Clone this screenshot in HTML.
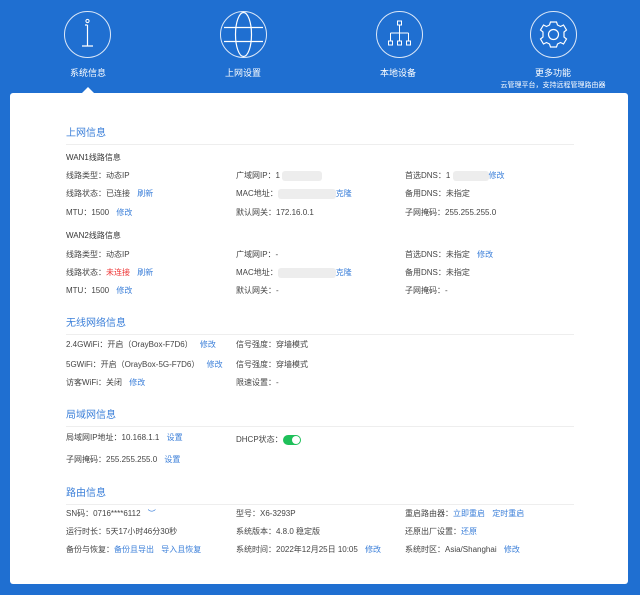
<!DOCTYPE html>
<html><head><meta charset="utf-8"><style>
*{margin:0;padding:0;box-sizing:border-box}
body{width:640px;height:595px;background:#1f6fd1;position:relative;overflow:hidden;font-family:"Liberation Sans","Noto Sans CJK SC",sans-serif;font-size:8px;color:#444}
.card{position:absolute;left:10px;top:93px;width:618px;height:491px;background:#fff;border-radius:3px}
.arrow{position:absolute;left:82px;top:87px;width:0;height:0;border-left:6px solid transparent;border-right:6px solid transparent;border-bottom:6px solid #fff}
.nav{position:absolute;color:#fff;text-align:center;font-size:9px}
.ic{position:absolute;width:47px;height:47px;border:1.3px solid #dce8f8;border-radius:50%}
.t{position:absolute;white-space:nowrap}
.h{position:absolute;left:66px;width:508px;color:#3b7fd9;font-size:10px;border-bottom:1.5px solid #eee;padding-bottom:5px}
.s{position:absolute;left:66px;color:#333;font-size:8px}
a{color:#3b7fd9;text-decoration:none;margin-left:5px}
.blur{display:inline-block;background:#ededed;height:10px;vertical-align:middle;border-radius:3px}
</style></head><body>
<div class="ic" style="left:64px;top:11px"><svg width="47" height="47" viewBox="0 0 47 47" style="position:absolute;left:-1px;top:-1px"><circle cx="23.5" cy="10" r="1.6" fill="none" stroke="#fff"/><path d="M23.5 14V35M18 35H29M21 14H23.5" stroke="#fff" stroke-width="1.2" fill="none"/></svg></div>
<div class="ic" style="left:220px;top:11px"><svg width="47" height="47" viewBox="0 0 47 47" style="position:absolute;left:-1px;top:-1px"><ellipse cx="23.5" cy="23.5" rx="8" ry="22" fill="none" stroke="#fff" stroke-width="1.2"/><path d="M4 16.5H43M4 30.5H43" stroke="#fff" stroke-width="1.2"/></svg></div>
<div class="ic" style="left:376px;top:11px"><svg width="47" height="47" viewBox="0 0 47 47" style="position:absolute;left:-1px;top:-1px"><rect x="21.5" y="10" width="4" height="4" fill="none" stroke="#fff"/><path d="M23.5 14V22M14.5 22H32.5M14.5 22V30M23.5 22V30M32.5 22V30" stroke="#fff" fill="none"/><rect x="12.5" y="30" width="4" height="4" fill="none" stroke="#fff"/><rect x="21.5" y="30" width="4" height="4" fill="none" stroke="#fff"/><rect x="30.5" y="30" width="4" height="4" fill="none" stroke="#fff"/></svg></div>
<div class="ic" style="left:530px;top:11px"><svg width="47" height="47" viewBox="0 0 47 47" style="position:absolute;left:-1px;top:-1px"><path d="M20.5 11H26.5L27.5 14L30.5 15.5L33.5 14L36.5 19L34 21V26L36.5 28L33.5 33L30.5 31.5L27.5 33L26.5 36H20.5L19.5 33L16.5 31.5L13.5 33L10.5 28L13 26V21L10.5 19L13.5 14L16.5 15.5L19.5 14Z" fill="none" stroke="#fff" stroke-width="1.2"/><circle cx="23.5" cy="23.5" r="5" fill="none" stroke="#fff" stroke-width="1.2"/></svg></div>
<div class="nav" style="left:48px;top:66px;width:80px">系统信息</div>
<div class="nav" style="left:203px;top:66px;width:80px">上网设置</div>
<div class="nav" style="left:358px;top:66px;width:80px">本地设备</div>
<div class="nav" style="left:513px;top:66px;width:80px">更多功能</div>
<div class="nav" style="left:488px;top:80px;width:130px;font-size:7px">云管理平台，支持远程管理路由器</div>
<div class="arrow"></div>
<div class="card"></div>

<div class="h" style="top:124px">上网信息</div>
<div class="s" style="top:152px">WAN1线路信息</div>
<div class="t" style="left:66px;top:170px">线路类型：动态IP</div>
<div class="t" style="left:236px;top:170px">广域网IP：1 <span class="blur" style="width:40px"></span></div>
<div class="t" style="left:405px;top:170px">首选DNS：1 <span class="blur" style="width:36px"></span><a style="margin-left:0">修改</a></div>
<div class="t" style="left:66px;top:188px">线路状态：已连接 <a>刷新</a></div>
<div class="t" style="left:236px;top:188px">MAC地址：<span class="blur" style="width:58px"></span><a style="margin-left:0">克隆</a></div>
<div class="t" style="left:405px;top:188px">备用DNS：未指定</div>
<div class="t" style="left:66px;top:207px">MTU：1500 <a>修改</a></div>
<div class="t" style="left:236px;top:207px">默认网关：172.16.0.1</div>
<div class="t" style="left:405px;top:207px">子网掩码：255.255.255.0</div>
<div class="s" style="top:230px">WAN2线路信息</div>
<div class="t" style="left:66px;top:249px">线路类型：动态IP</div>
<div class="t" style="left:236px;top:249px">广域网IP：-</div>
<div class="t" style="left:405px;top:249px">首选DNS：未指定 <a>修改</a></div>
<div class="t" style="left:66px;top:267px">线路状态：<span style="color:#e33">未连接</span> <a>刷新</a></div>
<div class="t" style="left:236px;top:267px">MAC地址：<span class="blur" style="width:58px"></span><a style="margin-left:0">克隆</a></div>
<div class="t" style="left:405px;top:267px">备用DNS：未指定</div>
<div class="t" style="left:66px;top:285px">MTU：1500 <a>修改</a></div>
<div class="t" style="left:236px;top:285px">默认网关：-</div>
<div class="t" style="left:405px;top:285px">子网掩码：-</div>

<div class="h" style="top:314px">无线网络信息</div>
<div class="t" style="left:66px;top:339px">2.4GWiFi：开启（OrayBox-F7D6） <a>修改</a></div>
<div class="t" style="left:236px;top:339px">信号强度：穿墙模式</div>
<div class="t" style="left:66px;top:359px">5GWiFi：开启（OrayBox-5G-F7D6） <a>修改</a></div>
<div class="t" style="left:236px;top:359px">信号强度：穿墙模式</div>
<div class="t" style="left:66px;top:377px">访客WiFi：关闭 <a>修改</a></div>
<div class="t" style="left:236px;top:377px">限速设置：-</div>

<div class="h" style="top:406px">局域网信息</div>
<div class="t" style="left:66px;top:432px">局域网IP地址：10.168.1.1 <a>设置</a></div>
<div class="t" style="left:236px;top:434px">DHCP状态：<span style="display:inline-block;width:18px;height:10px;background:#1fc05a;border-radius:5px;vertical-align:middle;position:relative"><span style="position:absolute;right:1px;top:1px;width:8px;height:8px;background:#fff;border-radius:50%"></span></span></div>
<div class="t" style="left:66px;top:454px">子网掩码：255.255.255.0 <a>设置</a></div>

<div class="h" style="top:484px">路由信息</div>
<div class="t" style="left:66px;top:508px">SN码：0716****6112 <a>︶</a></div>
<div class="t" style="left:236px;top:508px">型号：X6-3293P</div>
<div class="t" style="left:405px;top:508px">重启路由器：<a style="margin-left:0">立即重启</a> <a>定时重启</a></div>
<div class="t" style="left:66px;top:526px">运行时长：5天17小时46分30秒</div>
<div class="t" style="left:236px;top:526px">系统版本：4.8.0 稳定版</div>
<div class="t" style="left:405px;top:526px">还原出厂设置：<a style="margin-left:0">还原</a></div>
<div class="t" style="left:66px;top:544px">备份与恢复：<a style="margin-left:0">备份且导出</a> <a>导入且恢复</a></div>
<div class="t" style="left:236px;top:544px">系统时间：2022年12月25日 10:05 <a>修改</a></div>
<div class="t" style="left:405px;top:544px">系统时区：Asia/Shanghai <a>修改</a></div>
</body></html>
